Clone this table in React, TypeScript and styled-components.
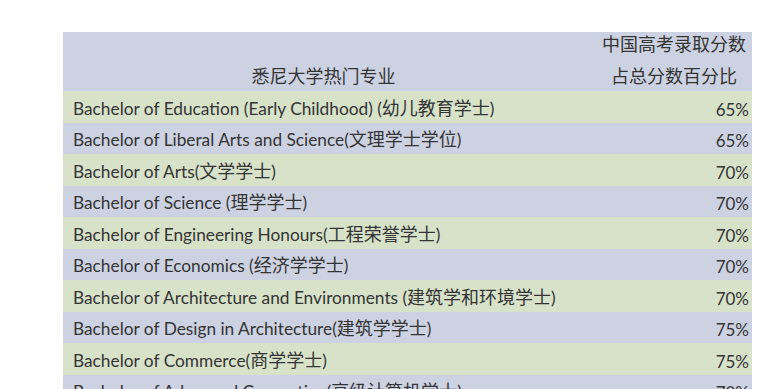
import React from 'react';
import styled, { createGlobalStyle } from 'styled-components';

const GlobalStyle = createGlobalStyle`
  body {
    margin: 0;
    background: #ffffff;
  }
`;

type Major = { name: string; pct: string };

const majors: Major[] = [
  { name: 'Bachelor of Education (Early Childhood) (幼儿教育学士)', pct: '65%' },
  { name: 'Bachelor of Liberal Arts and Science(文理学士学位)', pct: '65%' },
  { name: 'Bachelor of Arts(文学学士)', pct: '70%' },
  { name: 'Bachelor of Science (理学学士)', pct: '70%' },
  { name: 'Bachelor of Engineering Honours(工程荣誉学士)', pct: '70%' },
  { name: 'Bachelor of Economics (经济学学士)', pct: '70%' },
  { name: 'Bachelor of Architecture and Environments (建筑学和环境学士)', pct: '70%' },
  { name: 'Bachelor of Design in Architecture(建筑学学士)', pct: '75%' },
  { name: 'Bachelor of Commerce(商学学士)', pct: '75%' },
  { name: 'Bachelor of Advanced Computing(高级计算机学士)', pct: '70%' },
];

// split a label into latin / chinese runs so the chinese can be set a bit larger
const splitRuns = (text: string) => text.split(/([\u4e00-\u9fff]+)/).filter(Boolean);

export default function App() {
  return (
    <Page>
      <GlobalStyle />
      <Table>
        <thead>
          <tr>
            <HeadCell>
              <HeadLine>&nbsp;</HeadLine>
              <HeadLine $last>悉尼大学热门专业</HeadLine>
            </HeadCell>
            <HeadCell $narrow>
              <HeadLine>中国高考录取分数</HeadLine>
              <HeadLine $last>占总分数百分比</HeadLine>
            </HeadCell>
          </tr>
        </thead>
        <tbody>
          {majors.map((m, i) => (
            <Row key={m.name} $tone={i % 2 === 0 ? 'green' : 'blue'}>
              <NameCell>
                {splitRuns(m.name).map((part, j) =>
                  /[\u4e00-\u9fff]/.test(part) ? <Han key={j}>{part}</Han> : <span key={j}>{part}</span>
                )}
              </NameCell>
              <PctCell>{m.pct}</PctCell>
            </Row>
          ))}
        </tbody>
      </Table>
    </Page>
  );
}

const Page = styled.div`
  padding: 32px 0 0 63px;
  height: 357px;
  overflow: hidden;
`;

const Table = styled.table`
  border-collapse: collapse;
  width: 689px;
  table-layout: fixed;
  font-family: Lato, 'Noto Sans CJK SC', sans-serif;
  color: #343434;
`;

const HeadCell = styled.th<{ $narrow?: boolean }>`
  width: ${(p) => (p.$narrow ? '156px' : 'auto')};
  height: 59px;
  padding: 0 ${(p) => (p.$narrow ? '0' : '12px')} 0 0;
  background: #cdd2e3;
  font-family: 'Noto Sans CJK SC', sans-serif;
  font-weight: 400;
  font-size: 18px;
  text-align: center;
  vertical-align: top;
`;

const HeadLine = styled.div<{ $last?: boolean }>`
  height: ${(p) => (p.$last ? '27px' : '32px')};
  line-height: 22px;
`;

const Row = styled.tr<{ $tone: 'green' | 'blue' }>`
  height: 31.5px;
  background: ${(p) => (p.$tone === 'green' ? '#d7e2c9' : '#cdd2e3')};
`;

const NameCell = styled.td`
  padding: 0 0 0 10px;
  font-size: 17.3px;
  white-space: nowrap;
  vertical-align: middle;
`;

const Han = styled.span`
  font-family: 'Noto Sans CJK SC', sans-serif;
  font-size: 18px;
`;

const PctCell = styled.td`
  padding: 0 3px 3px 0;
  font-size: 17px;
  text-align: right;
  vertical-align: bottom;
`;
